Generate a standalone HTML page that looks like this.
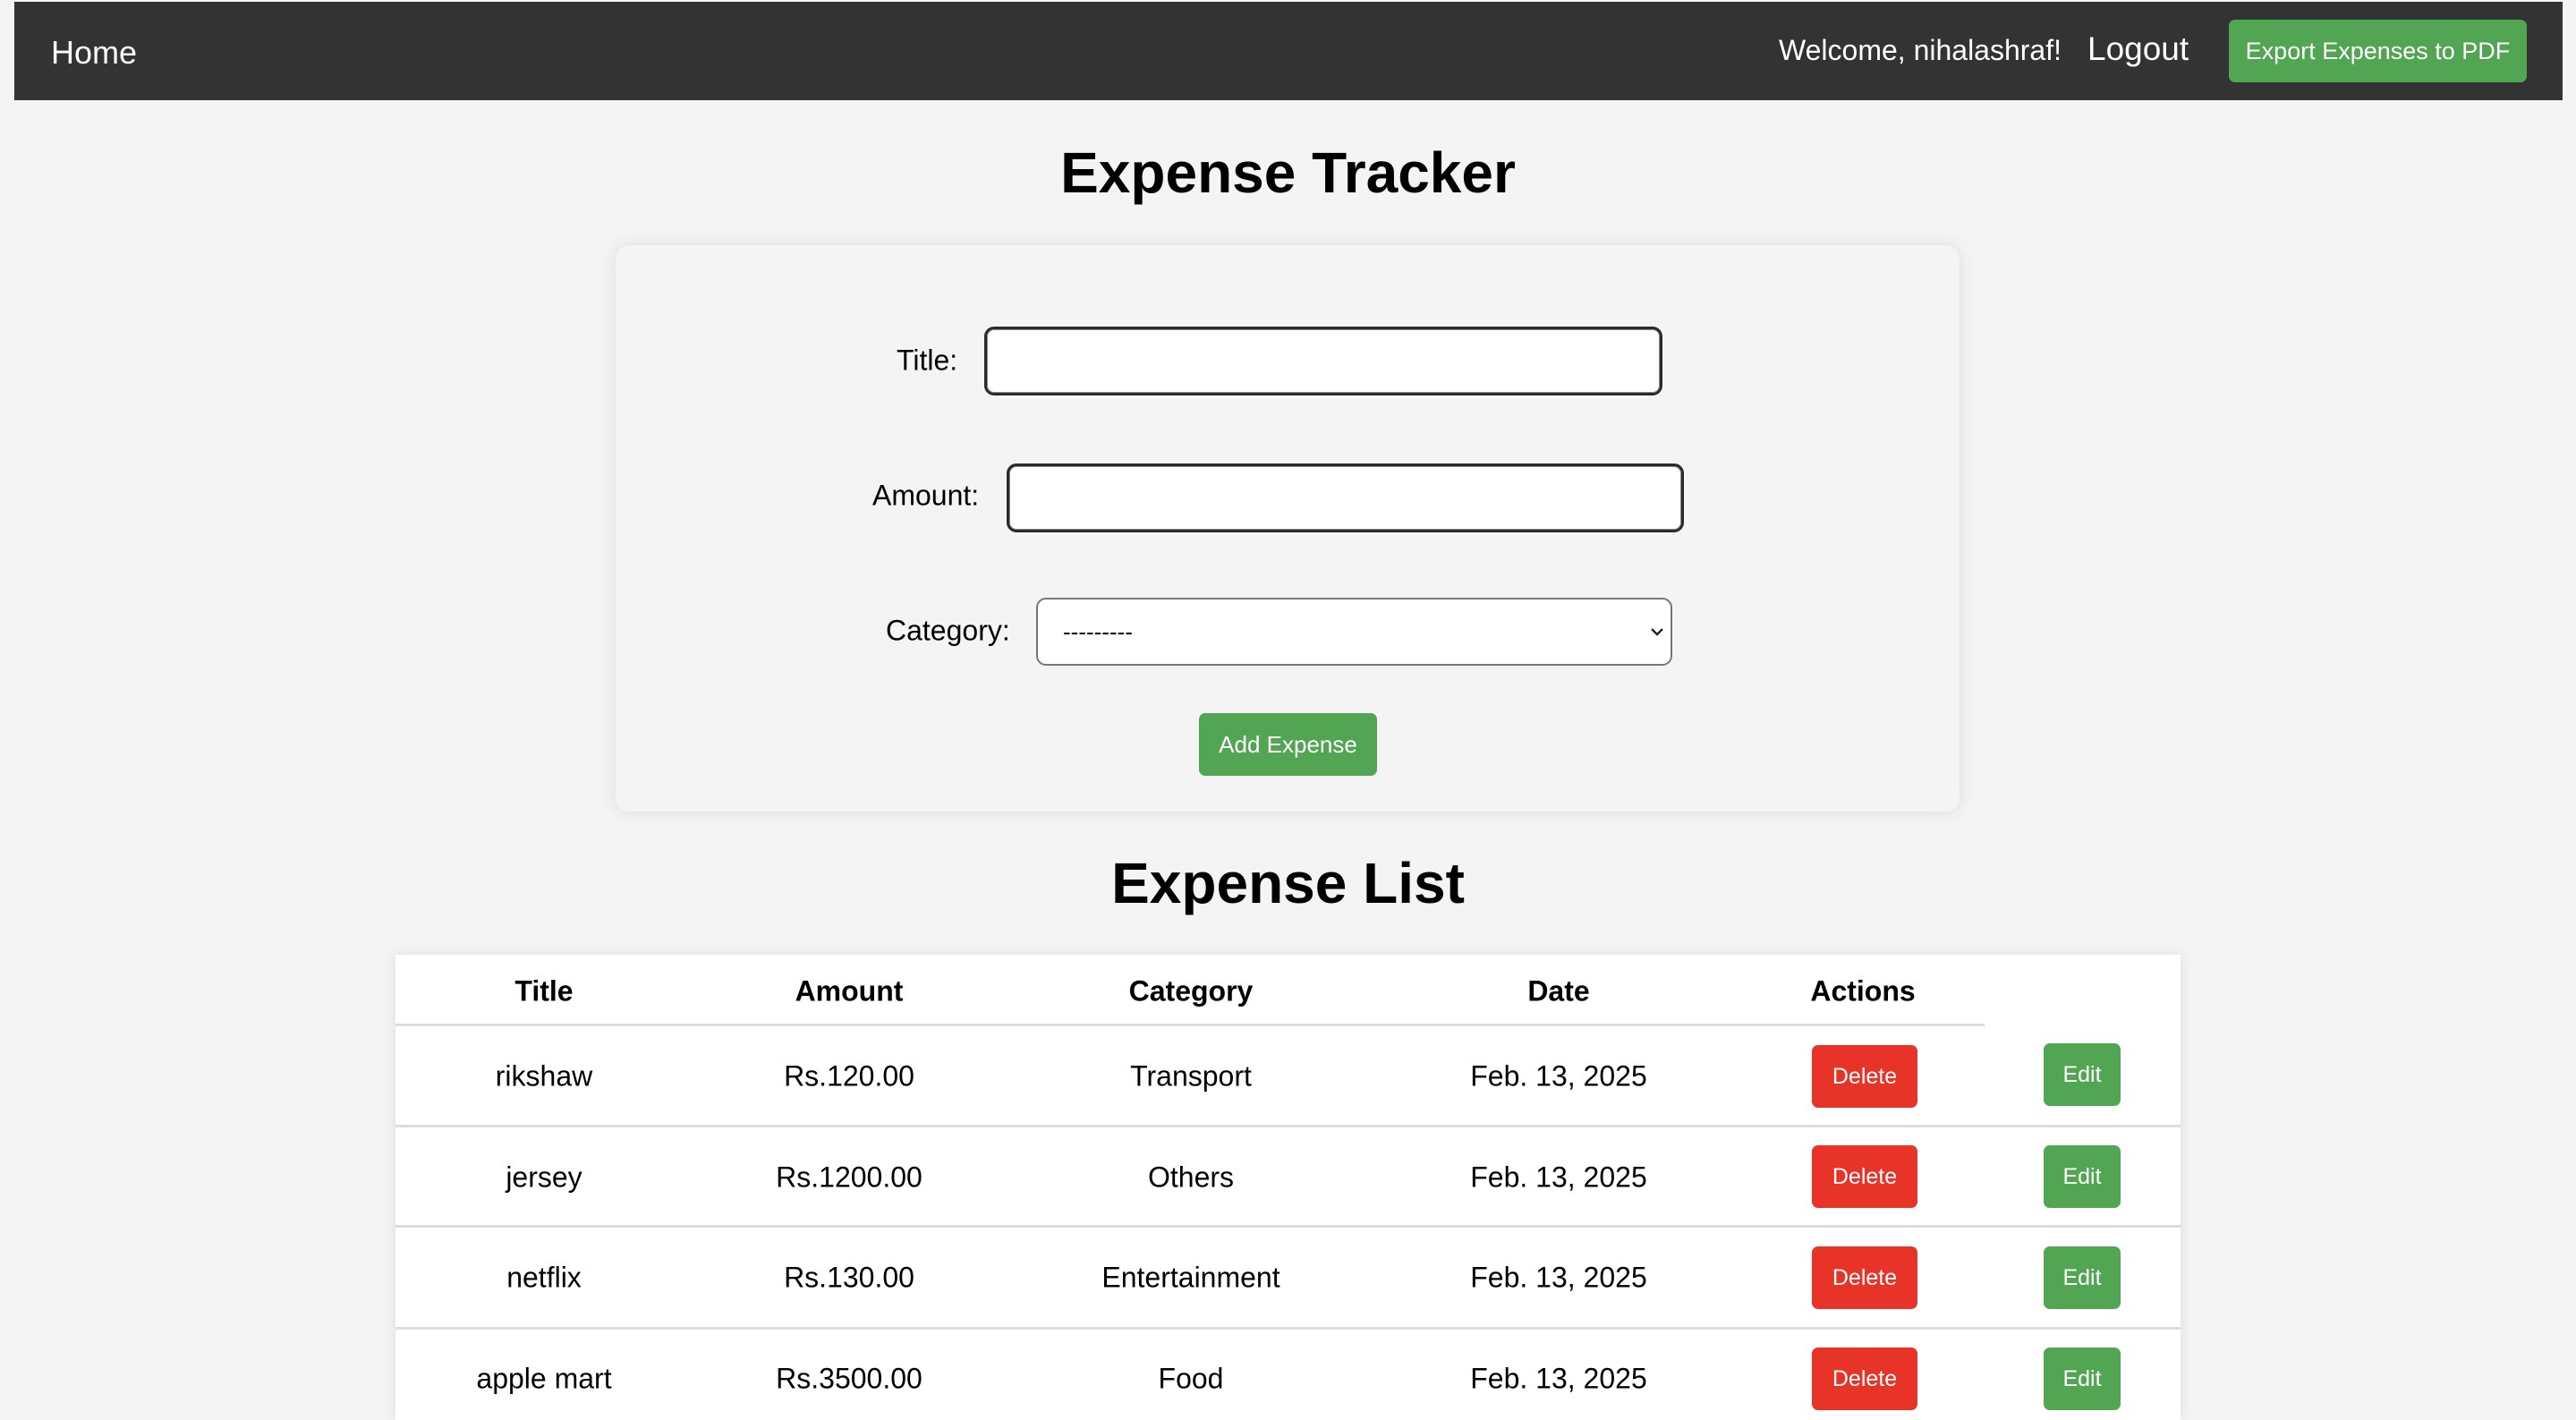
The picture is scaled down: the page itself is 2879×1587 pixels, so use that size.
<!DOCTYPE html>
<html><head><meta charset="utf-8"><style>
*{box-sizing:border-box;margin:0;padding:0}
body{width:2879px;height:1542px;overflow:hidden;background:#f4f4f4;font-family:"Liberation Sans",Arial,sans-serif;position:relative;color:#000}
.a{position:absolute}
.nav{left:16px;top:2px;width:2848px;height:110px;background:#333}
.w{color:#fff}
h1{position:absolute;left:0;width:2879px;text-align:center;font-size:64px;font-weight:bold}
.card{left:688px;top:274px;width:1502px;height:633px;background:#f4f4f4;border-radius:15px;box-shadow:0 0 18px rgba(0,0,0,0.1)}
.lbl{font-size:32px;transform:translateY(-50%)}
.inp{background:#fff;border:3px solid #2a2a2a;border-radius:11px;box-shadow:0 0 0 1px #888 inset}
.btn{color:#fff;display:flex;align-items:center;justify-content:center;border-radius:7px}
.g{background:#52a552}.r{background:#e83428}
.tbl{left:442px;top:1067px;width:1995px;height:520px;background:#fff;box-shadow:0 0 14px rgba(0,0,0,0.1)}
.c{position:absolute;transform:translate(-50%,-50%);font-size:32px;white-space:nowrap}
.hl{position:absolute;height:3px;background:#ddd;left:0}
</style></head><body>
<div class="a nav">
<div class="a w" style="left:41px;top:36px;font-size:36px">Home</div>
<div class="a w" style="left:1972px;top:36px;font-size:32px">Welcome, nihalashraf!</div>
<div class="a w" style="left:2317px;top:32px;font-size:37px">Logout</div>
<div class="a btn g" style="left:2475px;top:20px;width:333px;height:70px;font-size:27px">Export Expenses to PDF</div>
</div>
<h1 style="top:156px">Expense Tracker</h1>
<div class="a card"></div>
<div class="a lbl" style="left:1002px;top:403px">Title:</div>
<div class="a inp" style="left:1100px;top:365px;width:758px;height:77px"></div>
<div class="a lbl" style="left:975px;top:554px">Amount:</div>
<div class="a inp" style="left:1125px;top:518px;width:757px;height:77px"></div>
<div class="a lbl" style="left:990px;top:705px">Category:</div>
<div class="a" style="left:1158px;top:668px;width:711px;height:76px;background:#fff;border:2px solid #777;border-radius:11px"></div>
<div class="a" style="left:1188px;top:691px;font-size:26px">---------</div>
<svg class="a" style="left:1843px;top:700px" width="18" height="12" viewBox="0 0 18 12"><path d="M3 3 L9 9 L15 3" fill="none" stroke="#222" stroke-width="2.4"/></svg>
<div class="a btn g" style="left:1340px;top:797px;width:199px;height:70px;font-size:26px">Add Expense</div>
<h1 style="top:950px">Expense List</h1>
<div class="a tbl">
<div class="hl" style="top:77px;width:1776px"></div>
<div class="hl" style="top:190px;width:1995px"></div>
<div class="hl" style="top:302px;width:1995px"></div>
<div class="hl" style="top:416px;width:1995px"></div>
<b class="c" style="left:166px;top:41px">Title</b>
<b class="c" style="left:507px;top:41px">Amount</b>
<b class="c" style="left:889px;top:41px">Category</b>
<b class="c" style="left:1300px;top:41px">Date</b>
<b class="c" style="left:1640px;top:41px">Actions</b>

<div class="c" style="left:166px;top:136px">rikshaw</div>
<div class="c" style="left:507px;top:136px">Rs.120.00</div>
<div class="c" style="left:889px;top:136px">Transport</div>
<div class="c" style="left:1300px;top:136px">Feb. 13, 2025</div>

<div class="c" style="left:166px;top:249px">jersey</div>
<div class="c" style="left:507px;top:249px">Rs.1200.00</div>
<div class="c" style="left:889px;top:249px">Others</div>
<div class="c" style="left:1300px;top:249px">Feb. 13, 2025</div>

<div class="c" style="left:166px;top:361px">netflix</div>
<div class="c" style="left:507px;top:361px">Rs.130.00</div>
<div class="c" style="left:889px;top:361px">Entertainment</div>
<div class="c" style="left:1300px;top:361px">Feb. 13, 2025</div>

<div class="c" style="left:166px;top:474px">apple mart</div>
<div class="c" style="left:507px;top:474px">Rs.3500.00</div>
<div class="c" style="left:889px;top:474px">Food</div>
<div class="c" style="left:1300px;top:474px">Feb. 13, 2025</div>

<div class="a btn r" style="left:1583px;top:101px;width:118px;height:70px;font-size:25px">Delete</div>
<div class="a btn g" style="left:1842px;top:99px;width:86px;height:70px;font-size:25px">Edit</div>
<div class="a btn r" style="left:1583px;top:213px;width:118px;height:70px;font-size:25px">Delete</div>
<div class="a btn g" style="left:1842px;top:213px;width:86px;height:70px;font-size:25px">Edit</div>
<div class="a btn r" style="left:1583px;top:326px;width:118px;height:70px;font-size:25px">Delete</div>
<div class="a btn g" style="left:1842px;top:326px;width:86px;height:70px;font-size:25px">Edit</div>
<div class="a btn r" style="left:1583px;top:439px;width:118px;height:70px;font-size:25px">Delete</div>
<div class="a btn g" style="left:1842px;top:439px;width:86px;height:70px;font-size:25px">Edit</div>
</div>
</body></html>
